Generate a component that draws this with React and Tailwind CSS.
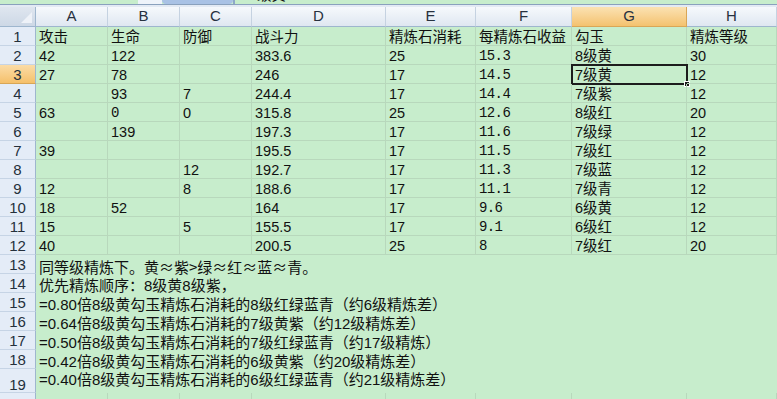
import React from 'react'

const COLS = ['A', 'B', 'C', 'D', 'E', 'F', 'G', 'H']
const W = ['w-[72px]', 'w-[72px]', 'w-[72px]', 'w-[134px]', 'w-[90px]', 'w-[96px]', 'w-[115px]', 'flex-1']

const ROWS = [
  ['攻击', '生命', '防御', '战斗力', '精炼石消耗', '每精炼石收益', '勾玉', '精炼等级'],
  ['42', '122', '', '383.6', '25', '15.3', '8级黄', '30'],
  ['27', '78', '', '246', '17', '14.5', '7级黄', '12'],
  ['', '93', '7', '244.4', '17', '14.4', '7级紫', '12'],
  ['63', '0', '0', '315.8', '25', '12.6', '8级红', '20'],
  ['', '139', '', '197.3', '17', '11.6', '7级绿', '12'],
  ['39', '', '', '195.5', '17', '11.5', '7级红', '12'],
  ['', '', '12', '192.7', '17', '11.3', '7级蓝', '12'],
  ['12', '', '8', '188.6', '17', '11.1', '7级青', '12'],
  ['18', '52', '', '164', '17', '9.6', '6级黄', '12'],
  ['15', '', '5', '155.5', '17', '9.1', '6级红', '12'],
  ['40', '', '', '200.5', '25', '8', '7级红', '20'],
]

const NOTES = [
  '优先精炼顺序：8级黄8级紫，',
  '=0.80倍8级黄勾玉精炼石消耗的8级红绿蓝青（约6级精炼差）',
  '=0.64倍8级黄勾玉精炼石消耗的7级黄紫（约12级精炼差）',
  '=0.50倍8级黄勾玉精炼石消耗的7级红绿蓝青（约17级精炼）',
  '=0.42倍8级黄勾玉精炼石消耗的6级黄紫（约20级精炼差）',
]

function RowHead({ n, active, end }) {
  return (
    <div
      className={`w-[36px] shrink-0 flex justify-center ${end ? 'items-end' : 'items-center'} text-[15px] text-[#24303c] border-r border-b border-r-[#9eb6ce] ${
        active
          ? 'bg-linear-to-b from-[#fbdca6] to-[#f5c06a] border-b-[#d8a656]'
          : 'bg-[#e4ecf7] border-b-[#c6d4e5]'
      }`}
    >
      {n}
    </div>
  )
}

function Cell({ w, mono, selected, children }) {
  return (
    <div
      className={`${w} shrink-0 relative flex items-end pl-[3px] border-r border-b border-[#b8d8bc] whitespace-nowrap ${
        mono ? "font-['Liberation_Mono',monospace] text-[14px] tracking-[-0.6px]" : ''
      }`}
    >
      {children}
      {selected && (
        <div className="absolute -top-[1px] -left-[1px] -right-[2px] -bottom-[2px] border-2 border-[#1d1d1d]">
          <div className="absolute -right-[4px] -bottom-[4px] w-[6px] h-[6px] bg-[#1d1d1d] border border-white" />
        </div>
      )}
    </div>
  )
}

export default function App() {
  return (
    <div className="w-[777px] h-[399px] overflow-hidden bg-[#c7edcc] text-[#111] font-['Liberation_Sans','Noto_Sans_CJK_SC',sans-serif]">
      {/* formula bar remnant */}
      <div className="flex h-[4px] overflow-hidden">
        <div className="w-[138px] shrink-0" />
        <div className="w-[24px] shrink-0 bg-[#eef3fa]" />
        <div className="w-[71px] shrink-0 bg-[#a9c2e5] rounded-b-[6px]" />
        <div className="w-[2px] shrink-0 bg-[#8ea8c8]" />
        <div className="flex-1 pl-[14px] text-[14.5px] leading-[16px] -mt-[13px]">7级黄</div>
      </div>
      <div className="h-[1px] bg-[#8aa1bd]" />
      <div className="h-[2px] bg-[#e3eaf4]" />

      {/* column header */}
      <div className="flex h-[20px]">
        <div className="w-[36px] shrink-0 relative bg-linear-to-b from-[#dfe6ef] to-[#cdd8e6] border-r border-b border-[#9eb6ce]">
          <svg className="absolute right-[3px] bottom-[3px]" width="11" height="11">
            <polygon points="11,0 11,11 0,11" fill="#eef2f8" />
          </svg>
        </div>
        {COLS.map((c, i) => (
          <div
            key={c}
            className={`${W[i]} shrink-0 flex items-center justify-center text-[15px] text-[#27313f] border-r border-b ${
              c === 'G'
                ? 'bg-linear-to-b from-[#fbe2b2] to-[#f4c26e] border-r-[#d9a656] border-b-[#d9a656]'
                : 'bg-linear-to-b from-[#f6f9fc] to-[#dfe7f1] border-r-[#c5d2e1] border-b-[#9eb6ce]'
            }`}
          >
            {c}
          </div>
        ))}
      </div>

      {/* data rows */}
      {ROWS.map((r, ri) => (
        <div key={ri} className="flex h-[19px] text-[14.5px] leading-[15px]">
          <RowHead n={ri + 1} active={ri === 2} />
          {r.map((v, ci) => (
            <Cell
              key={ci}
              w={W[ci]}
              mono={(ci === 5 && ri > 0) || (ri === 4 && ci === 1)}
              selected={ri === 2 && ci === 6}
            >
              {v}
            </Cell>
          ))}
        </div>
      ))}

      {/* notes */}
      <div className="flex h-[19px] text-[15px] leading-[15px]">
        <RowHead n={13} />
        <div className="flex-1 flex items-end pl-[3px] whitespace-nowrap font-['Noto_Sans_CJK_SC',sans-serif]">
          同等级精炼下。黄≈紫&gt;绿≈红≈蓝≈青。
        </div>
      </div>
      {NOTES.map((t, i) => (
        <div key={i} className="flex h-[19px] text-[15px] leading-[15px]">
          <RowHead n={14 + i} />
          <div className="flex-1 flex items-end pl-[3px] whitespace-nowrap">{t}</div>
        </div>
      ))}
      <div className="flex h-[24px] text-[15px] leading-[15px]">
        <RowHead n={19} end />
        <div className="flex-1 flex items-start pt-[3px] pl-[3px] whitespace-nowrap">
          =0.40倍8级黄勾玉精炼石消耗的6级红绿蓝青（约21级精炼差）
        </div>
      </div>
      <div className="flex h-[20px]">
        <RowHead n="" />
        {COLS.map((c, i) => (
          <div key={c} className={`${W[i]} shrink-0 border-r border-[#b8d8bc]`} />
        ))}
      </div>
    </div>
  )
}
